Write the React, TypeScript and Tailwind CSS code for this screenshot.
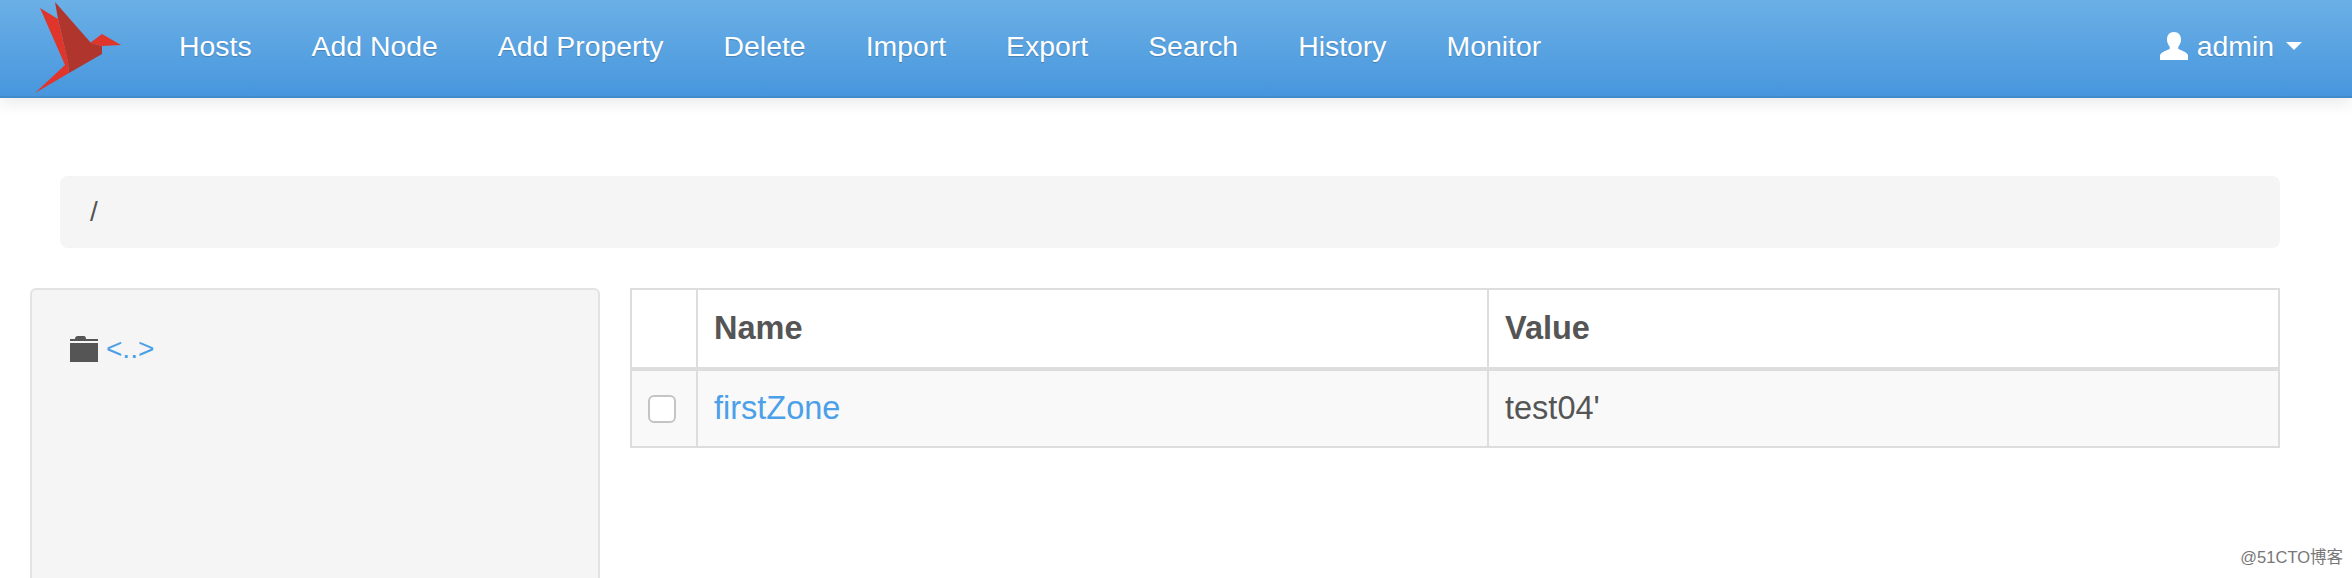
const navItems = ["Hosts", "Add Node", "Add Property", "Delete", "Import", "Export", "Search", "History", "Monitor"];

const Logo = () => (
  <svg width="122" height="92" viewBox="0 0 122 92" className="shrink-0">
    <polygon points="55,0 91,41 102,44 102,52 69,71 68,60 58,17" fill="#b0352c" />
    <polygon points="40,6 58,17 68,60 69,71 35,91 65,63" fill="#e0352b" />
    <polygon points="102,32 121,43 102,44 90,41" fill="#e0352b" />
  </svg>
);

const App = () => {
  return (
    <div className="h-[578px] w-[2352px] overflow-hidden bg-white font-['Liberation_Sans',sans-serif] text-[32.5px] text-[#555555]">
      <nav className="flex h-[98px] items-center justify-between border-b-2 border-[#428bca] bg-gradient-to-b from-[#6bb0e6] to-[#4796dd] pr-[50px] text-[28.4px] text-white shadow-[0_6px_14px_rgba(0,0,0,0.08)]">
        <div className="flex items-center">
          <Logo />
          <ul className="mb-[3px] ml-[57px] flex gap-[60px]">
            {navItems.map((item) => (
              <li key={item} className="[text-shadow:0_1px_1px_rgba(0,0,0,0.2)]">{item}</li>
            ))}
          </ul>
        </div>
        <div className="mb-[3px] flex items-center">
          <svg width="28" height="28" viewBox="0 0 28 28" fill="white" className="mr-[9px]">
            <path d="M14 0c4.500 0 7 3 7 7.500 0 3-1.200 5.500-2.700 7v2.500c3 1.500 7.700 2.500 9.700 6v5H0v-5c2-3.500 6.700-4.500 9.700-6v-2.500C8.200 13 7 10.500 7 7.500 7 3 9.500 0 14 0z" />
          </svg>
          <span className="[text-shadow:0_1px_1px_rgba(0,0,0,0.2)]">admin</span>
          <span className="ml-[12px] h-0 w-0 border-x-[8px] border-t-[8px] border-x-transparent border-t-white" />
        </div>
      </nav>

      <div className="mt-[78px] mr-[72px] ml-[60px] flex h-[72px] items-center rounded-[8px] bg-[#f5f5f5] px-[30px] text-[28px]">/</div>

      <div className="mt-[40px] flex items-start gap-[30px] pr-[72px] pl-[30px]">
        <aside className="h-[320px] w-[570px] shrink-0 rounded-[6px] border-2 border-[#e3e3e3] bg-[#f5f5f5] px-[38px] pt-[38px] text-[28px]">
          <div className="flex items-center gap-[8px]">
            <svg width="28" height="26" viewBox="0 0 28 26" fill="#555555">
              <path d="M0 3h5c0-2 1-3 3-3h6c1 0 2 1 2 3h12v2H0zM0 7h28v19H0z" />
            </svg>
            <a className="text-[#4ba0e8]">&lt;..&gt;</a>
          </div>
        </aside>
        <table className="w-[1650px] table-fixed border-collapse border-2 border-[#dddddd]">
          <thead>
            <tr className="h-[80px] border-b-4 border-[#dddddd] text-left">
              <th className="w-[66px] border-r-2 border-[#dddddd]"></th>
              <th className="w-[791px] border-r-2 border-[#dddddd] pl-[16px] font-bold">Name</th>
              <th className="pl-[16px] font-bold">Value</th>
            </tr>
          </thead>
          <tbody>
            <tr className="h-[78px] bg-[#f9f9f9]">
              <td className="border-r-2 border-[#dddddd]">
                <span className="ml-[16px] block h-[28px] w-[28px] rounded-[6px] border-2 border-[#c4c4c4] bg-white"></span>
              </td>
              <td className="border-r-2 border-[#dddddd] pl-[16px] text-[#4ba0e8]">firstZone</td>
              <td className="pl-[16px]">test04'</td>
            </tr>
          </tbody>
        </table>
      </div>

      <div className="absolute right-[9px] bottom-[8px] font-['Liberation_Sans','Noto_Sans_CJK_SC',sans-serif] text-[16.5px] text-[#777777]">@51CTO博客</div>
    </div>
  );
};

export default App;
